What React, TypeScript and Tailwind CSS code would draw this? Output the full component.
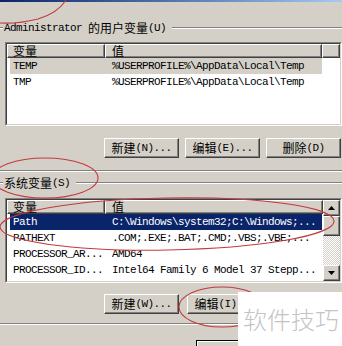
import React from "react";

const cjk = "font-['Noto_Sans_CJK_SC',sans-serif] text-[12px] leading-none";
const mono = "font-['Liberation_Mono','Noto_Sans_CJK_SC',monospace] text-[11px] tracking-[-0.6px] leading-none";

function Etched() {
  return <div className="h-[2px] border-t border-b border-t-[#808080] border-b-white" />;
}

function GroupTitle({ cn, latin, pre }: { cn: string; latin: string; pre?: string }) {
  return (
    <div className="flex items-center h-[14px]">
      <div className="w-[3px]"><Etched /></div>
      <div className="flex items-center pl-[1px] pr-[6px] text-black">
        {pre && <span className={`${mono} pr-[6px]`}>{pre}</span>}
        <span className={cjk}>{cn}</span>
        <span className={mono}>{latin}</span>
      </div>
      <div className="flex-1"><Etched /></div>
    </div>
  );
}

function Btn({ cn, latin }: { cn: string; latin: string }) {
  return (
    <div className="w-[75px] h-5 flex items-center justify-center bg-[#d4d0c8] border border-t-white border-l-white border-r-[#404040] border-b-[#404040] shadow-[inset_-1px_-1px_#808080] text-black">
      <span className={cjk}>{cn}</span>
      <span className={mono}>{latin}</span>
    </div>
  );
}

function HeaderCell({ w, label, pl }: { w: string; label?: string; pl: string }) {
  return (
    <div className={`${w} h-full flex items-center bg-[#d4d0c8] border border-t-white border-l-white border-r-[#404040] border-b-[#404040] shadow-[inset_-1px_-1px_#808080] ${pl}`}>
      {label && <span className={`${cjk} text-black`}>{label}</span>}
    </div>
  );
}

type Row = { name: string; value: string; sel?: "gray" | "blue" };

function Rows({ rows }: { rows: Row[] }) {
  return (
    <div className="pl-[3px] flex flex-col">
      {rows.map((r) => {
        const bg = r.sel === "blue" ? "bg-[#0a246a] text-white" : r.sel === "gray" ? "bg-[#d4d0c8] text-black" : "text-black";
        return (
          <div key={r.name} className={`flex h-4 items-center w-[312px] ${bg}`}>
            <div className={`w-[95px] pl-[3px] whitespace-nowrap ${mono}`}>{r.name}</div>
            <div className={`w-[217px] pl-[7px] whitespace-nowrap ${mono}`}>{r.value}</div>
          </div>
        );
      })}
    </div>
  );
}

function Sunken({ h, children }: { h: string; children: React.ReactNode }) {
  return (
    <div className={`ml-[5px] w-[337px] ${h} border border-t-[#808080] border-l-[#808080] border-r-white border-b-white bg-white`}>
      <div className="h-full border border-t-[#404040] border-l-[#404040] border-r-[#d4d0c8] border-b-[#d4d0c8] overflow-hidden">
        {children}
      </div>
    </div>
  );
}

function Arrow({ up }: { up?: boolean }) {
  return (
    <div className="h-4 flex items-center justify-center bg-[#d4d0c8] border border-t-white border-l-white border-r-[#404040] border-b-[#404040] shadow-[inset_-1px_-1px_#808080]">
      <svg width="7" height="4" viewBox="0 0 7 4">
        {up ? <path d="M3.5 0 L7 4 L0 4 Z" fill="#000" /> : <path d="M0 0 L7 0 L3.5 4 Z" fill="#000" />}
      </svg>
    </div>
  );
}

export default function App() {
  const userRows: Row[] = [
    { name: "TEMP", value: "%USERPROFILE%\\AppData\\Local\\Temp", sel: "gray" },
    { name: "TMP", value: "%USERPROFILE%\\AppData\\Local\\Temp" },
  ];
  const sysRows: Row[] = [
    { name: "Path", value: "C:\\Windows\\system32;C:\\Windows;...", sel: "blue" },
    { name: "PATHEXT", value: ".COM;.EXE;.BAT;.CMD;.VBS;.VBE;..." },
    { name: "PROCESSOR_AR...", value: "AMD64" },
    { name: "PROCESSOR_ID...", value: "Intel64 Family 6 Model 37 Stepp..." },
  ];

  return (
    <div className="relative w-[342px] h-[346px] overflow-hidden bg-[#d4d0c8]">
      <div className="h-[2px] bg-gradient-to-r from-[#0a246a] to-[#a6caf0]" />

      <div className="mt-[19px]">
        <GroupTitle pre="Administrator" cn="的用户变量" latin="(U)" />
      </div>

      <div className="mt-[7px]">
        <Sunken h="h-[84px]">
          <div className="flex h-[14px]">
            <HeaderCell w="w-[98px]" label="变量" pl="pl-[5px]" />
            <HeaderCell w="w-[217px]" label="值" pl="pl-[6px]" />
            <HeaderCell w="flex-1" pl="" />
          </div>
          <Rows rows={userRows} />
        </Sunken>
      </div>

      <div className="mt-[12px] flex justify-end gap-[6px] pr-[1px]">
        <Btn cn="新建" latin="(N)..." />
        <Btn cn="编辑" latin="(E)..." />
        <Btn cn="删除" latin="(D)" />
      </div>

      <div className="mt-[12px]">
        <Etched />
      </div>

      <div className="mt-[4px]">
        <GroupTitle cn="系统变量" latin="(S)" />
      </div>

      <div className="mt-[8px]">
        <Sunken h="h-[85px]">
          <div className="flex h-full">
            <div className="w-[316px]">
              <div className="flex h-[14px]">
                <HeaderCell w="w-[98px]" label="变量" pl="pl-[5px]" />
                <HeaderCell w="flex-1" label="值" pl="pl-[6px]" />
              </div>
              <Rows rows={sysRows} />
            </div>
            <div className="w-[17px] flex flex-col">
              <Arrow up />
              <div className="h-[20px] bg-[#d4d0c8] border border-t-white border-l-white border-r-[#404040] border-b-[#404040] shadow-[inset_-1px_-1px_#808080]" />
              <div className="flex-1 bg-[repeating-conic-gradient(#ffffff_0_25%,#d4d0c8_0_50%)] bg-[length:2px_2px]" />
              <Arrow />
            </div>
          </div>
        </Sunken>
      </div>

      <div className="mt-[11px] flex gap-[8px] pl-[104px]">
        <Btn cn="新建" latin="(W)..." />
        <Btn cn="编辑" latin="(I)..." />
      </div>

      <div className="mt-[9px]">
        <Etched />
      </div>

      <div className="mt-[15px] pl-[196px] flex">
        <div className="w-[75px] h-5 border-t border-l border-black">
          <div className="h-full border-t border-l border-white bg-[#d4d0c8] pl-[17px] pt-[3px]">
            <span className={`${cjk} text-black`}>确定</span>
          </div>
        </div>
      </div>

      <svg className="absolute inset-0 pointer-events-none" width="342" height="346" viewBox="0 0 342 346" fill="none" stroke="#c23a3e" strokeWidth="1.1">
        <path d="M66 0 Q58 13 38 19 Q18 24 0 23" />
        <ellipse cx="45" cy="178" rx="53" ry="20" />
        <ellipse cx="167" cy="224" rx="167" ry="26" transform="rotate(-1 167 224)" />
        <ellipse cx="222" cy="307" rx="43" ry="20" />
      </svg>

      <div className="absolute left-[238px] top-[292px] w-[104px] h-[54px] bg-white flex flex-col pl-[5px] pt-[15px]">
        <div className="h-[24px] font-['Noto_Sans_CJK_SC',sans-serif] font-light text-[24px] leading-[24px] text-[#c4c4c4] whitespace-nowrap">软件技巧</div>
      </div>
    </div>
  );
}
